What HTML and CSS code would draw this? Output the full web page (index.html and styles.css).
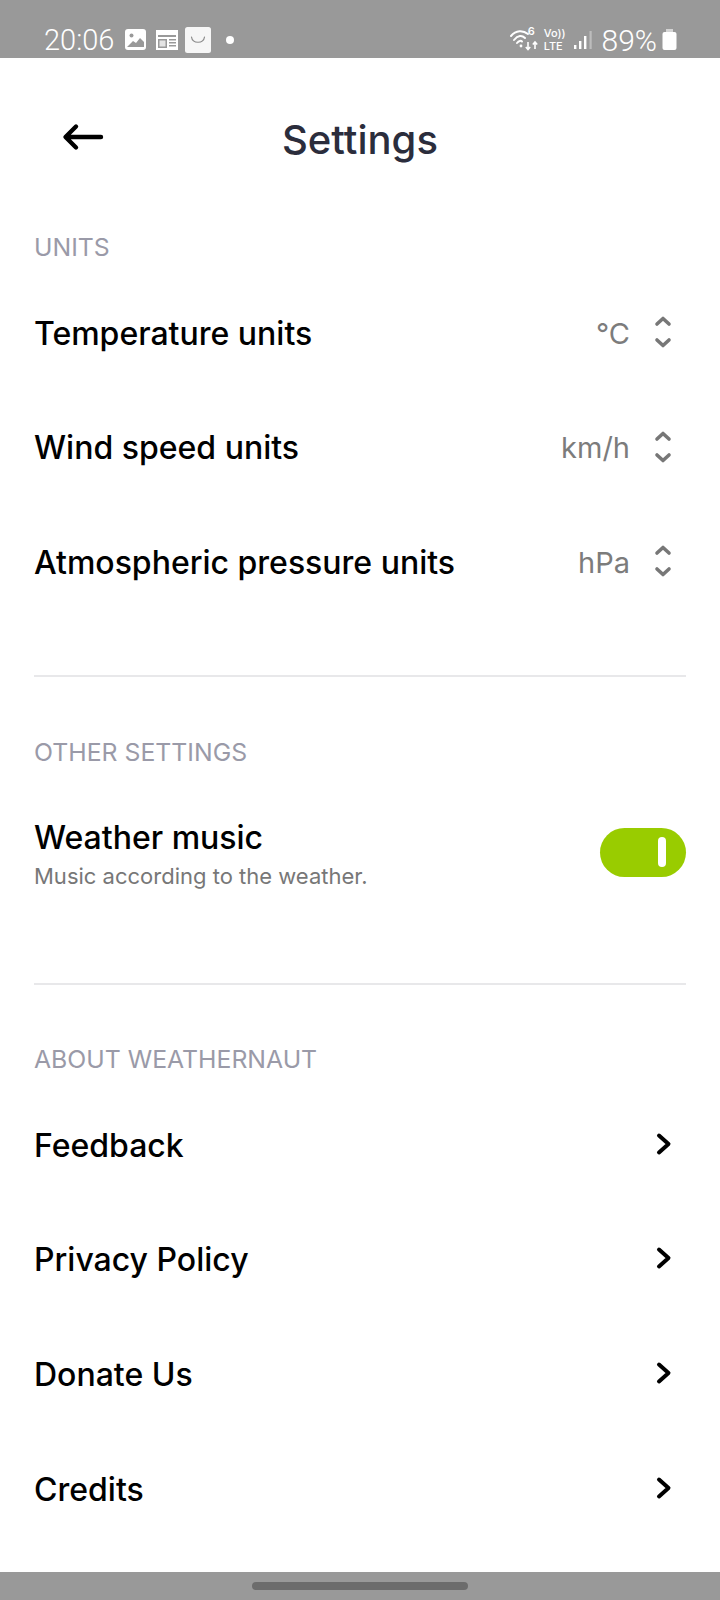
FILE: index.html
```html
<!DOCTYPE html>
<html lang="en">
<head>
  <meta charset="UTF-8">
  <meta name="viewport" content="width=device-width, initial-scale=1.0">
  <title>Settings</title>
  <link rel="stylesheet" href="styles.css">
</head>
<body>
  <div class="status-bar">
    <div class="status-left">
      <span class="status-time">20:06</span>
      <svg class="status-icon" width="22" height="22" viewBox="0 0 22 22"><rect x="0" y="0" width="21" height="21" rx="3" fill="#fff"/><circle cx="6.5" cy="6.5" r="2" fill="#999"/><path d="M2 18 L8 12 L11 14 L15 9 L19 13 V18 Z" fill="#999"/></svg>
      <svg class="status-icon" width="22" height="22" viewBox="0 0 22 22"><path d="M0 1 H22 V21 H0 Z" fill="#fff"/><path d="M2 6 H20 V8 H2 Z M2 10 H11 V19 H2 Z M13 10 H20 V11.5 H13 Z M13 13 H20 V14.5 H13 Z M13 16 H20 V17.5 H13 Z" fill="#999"/><rect x="3.5" y="11.5" width="6" height="6" fill="#e4e4e4"/></svg>
      <svg class="status-icon bag" width="26" height="26" viewBox="0 0 26 26"><rect width="26" height="26" rx="2.5" fill="#f6f6f6"/><path d="M6.5 10 C7.5 17 18.5 17 19.5 10" fill="none" stroke="#8a8a8a" stroke-width="1.2" stroke-linecap="round"/></svg>
      <span class="status-dot"></span>
    </div>
    <div class="status-right">
      <svg class="wifi" width="30" height="22" viewBox="0 0 30 22"><g fill="none" stroke="#fff" stroke-linecap="round" stroke-width="2"><path d="M1 7 C6 1 13 1 18 5"/><path d="M4 11 C8 6 12 6 15 9"/><path d="M7 14 C9 11.5 11 11.5 12 12.5"/></g><circle cx="11" cy="17" r="1.4" fill="#fff"/><path d="M18 13 V20 M15.8 18 L18 20.5 L20.2 18 M25 20 V13 M22.8 15.5 L25 13 L27.2 15.5" fill="none" stroke="#fff" stroke-width="1.6"/></svg>
      <span class="six">6</span>
      <span class="volte">Vo))<br>LTE</span>
      <svg class="signal" width="18" height="20" viewBox="0 0 18 20"><rect x="0" y="15" width="2.4" height="4" fill="#fff"/><rect x="5" y="11" width="2.4" height="8" fill="#fff"/><rect x="10" y="6" width="2.4" height="13" fill="#fff"/><rect x="15.5" y="1" width="2.2" height="18" fill="#bdbdbd"/></svg>
      <span class="status-battery-text">89%</span>
      <svg class="battery" width="15" height="22" viewBox="0 0 15 22"><rect x="4" y="0" width="7" height="3" fill="#d4d4d4"/><rect x="0.5" y="3" width="14" height="18" rx="2" fill="#fff"/></svg>
    </div>
  </div>

  <main class="content">
    <header class="top-bar">
      <svg class="back" width="44" height="28" viewBox="0 0 44 28"><path d="M41 14 H6 M16 3.5 L5.5 14 L16 24.5" fill="none" stroke="#000" stroke-width="4.4" stroke-linecap="round" stroke-linejoin="round"/></svg>
      <h1>Settings</h1>
    </header>

    <section class="group">
      <h2>UNITS</h2>
      <div class="row">
        <span class="label">Temperature units</span>
        <span class="value">°C</span>
        <svg class="updown" width="18" height="34" viewBox="0 0 18 34"><path d="M3 9 L9 3.5 L15 9 M3 25 L9 30.5 L15 25" fill="none" stroke="#777" stroke-width="3.6" stroke-linecap="round" stroke-linejoin="round"/></svg>
      </div>
      <div class="row">
        <span class="label">Wind speed units</span>
        <span class="value">km/h</span>
        <svg class="updown" width="18" height="34" viewBox="0 0 18 34"><path d="M3 9 L9 3.5 L15 9 M3 25 L9 30.5 L15 25" fill="none" stroke="#777" stroke-width="3.6" stroke-linecap="round" stroke-linejoin="round"/></svg>
      </div>
      <div class="row">
        <span class="label">Atmospheric pressure units</span>
        <span class="value">hPa</span>
        <svg class="updown" width="18" height="34" viewBox="0 0 18 34"><path d="M3 9 L9 3.5 L15 9 M3 25 L9 30.5 L15 25" fill="none" stroke="#777" stroke-width="3.6" stroke-linecap="round" stroke-linejoin="round"/></svg>
      </div>
    </section>

    <section class="group other">
      <h2>OTHER SETTINGS</h2>
      <div class="toggle-row">
        <div>
          <div class="label">Weather music</div>
          <div class="sub">Music according to the weather.</div>
        </div>
        <span class="toggle"><span class="knob"></span></span>
      </div>
    </section>

    <section class="group about">
      <h2>ABOUT WEATHERNAUT</h2>
      <div class="row">
        <span class="label">Feedback</span>
        <svg class="chevron" width="18" height="24" viewBox="0 0 18 24"><path d="M4 3.5 L13.5 12 L4 20.5" fill="none" stroke="#000" stroke-width="4" stroke-linecap="round" stroke-linejoin="round"/></svg>
      </div>
      <div class="row">
        <span class="label">Privacy Policy</span>
        <svg class="chevron" width="18" height="24" viewBox="0 0 18 24"><path d="M4 3.5 L13.5 12 L4 20.5" fill="none" stroke="#000" stroke-width="4" stroke-linecap="round" stroke-linejoin="round"/></svg>
      </div>
      <div class="row">
        <span class="label">Donate Us</span>
        <svg class="chevron" width="18" height="24" viewBox="0 0 18 24"><path d="M4 3.5 L13.5 12 L4 20.5" fill="none" stroke="#000" stroke-width="4" stroke-linecap="round" stroke-linejoin="round"/></svg>
      </div>
      <div class="row">
        <span class="label">Credits</span>
        <svg class="chevron" width="18" height="24" viewBox="0 0 18 24"><path d="M4 3.5 L13.5 12 L4 20.5" fill="none" stroke="#000" stroke-width="4" stroke-linecap="round" stroke-linejoin="round"/></svg>
      </div>
    </section>
  </main>

  <div class="nav-bar"><span class="nav-handle"></span></div>
</body>
</html>
```

FILE: styles.css
```css
* { box-sizing: border-box; }
html, body { margin: 0; padding: 0; }
body { width: 720px; height: 1600px; background: #fff; font-family: Inter, "Liberation Sans", sans-serif; color: #000; display: flex; flex-direction: column; overflow: hidden; }

.status-bar { height: 58px; background: #999; color: #fff; display: flex; justify-content: space-between; align-items: center; padding: 22px 43px 0 44px; flex: none; }
.status-left, .status-right { display: flex; align-items: center; }
.status-time { font-size: 29px; font-family: Roboto, sans-serif; font-weight: 300; margin-right: 11px; }
.status-icon { margin-right: 9px; }
.status-icon.bag { margin-left: -2px; }
.status-dot { width: 8px; height: 8px; border-radius: 50%; background: #fff; margin-left: 6px; }
.status-right { position: relative; }
.wifi { margin-right: 4px; }
.six { position: absolute; left: 18px; top: 1px; font-size: 11px; font-weight: 600; }
.volte { font-size: 11px; line-height: 13px; font-weight: 500; margin-right: 8px; }
.signal { margin-right: 10px; }
.status-battery-text { font-size: 30px; font-family: Roboto, sans-serif; font-weight: 300; margin-right: 5px; }

.content { flex: 1; padding: 0 34px; display: flex; flex-direction: column; }
.top-bar { height: 175px; display: flex; align-items: center; justify-content: center; position: relative; padding-bottom: 12px; }
.top-bar h1 { margin: 0; font-size: 40px; font-weight: 500; color: #2b2d3c; }
.back { position: absolute; left: 26px; top: 65px; }

h2 { margin: 0; font-size: 24.8px; font-weight: 400; color: #9a9aa8; height: 28px; line-height: 28px; }
.group { height: 444px; border-bottom: 2px solid #e8e8ea; }
.group.other { padding-top: 61px; height: 308px; }
.group.about { padding-top: 60px; height: auto; border-bottom: none; }

.row { height: 114.6px; display: flex; align-items: center; }
.group > h2 + .row { margin-top: 15px; }
.label { font-size: 32px; font-weight: 500; }
.row .label { flex: 1; }
.value { font-size: 29px; color: #7c7c7c; margin-right: 24px; }
.updown { margin-right: 14px; margin-top: -2px; }
.chevron { margin-right: 13px; margin-top: -3px; }

.toggle-row { display: flex; justify-content: space-between; align-items: center; margin-top: 52px; }
.sub { font-size: 22px; color: #777; margin-top: 6px; }
.toggle { width: 86px; height: 49px; margin-top: -3px; border-radius: 25px; background: #99cc00; display: flex; align-items: center; justify-content: flex-end; padding-right: 20px; }
.knob { width: 8px; height: 30px; border-radius: 4px; background: #fff; }

.nav-bar { height: 28px; background: #999; display: flex; justify-content: center; align-items: center; flex: none; }
.nav-handle { width: 216px; height: 8px; border-radius: 4px; background: #6c6c6c; }
```
